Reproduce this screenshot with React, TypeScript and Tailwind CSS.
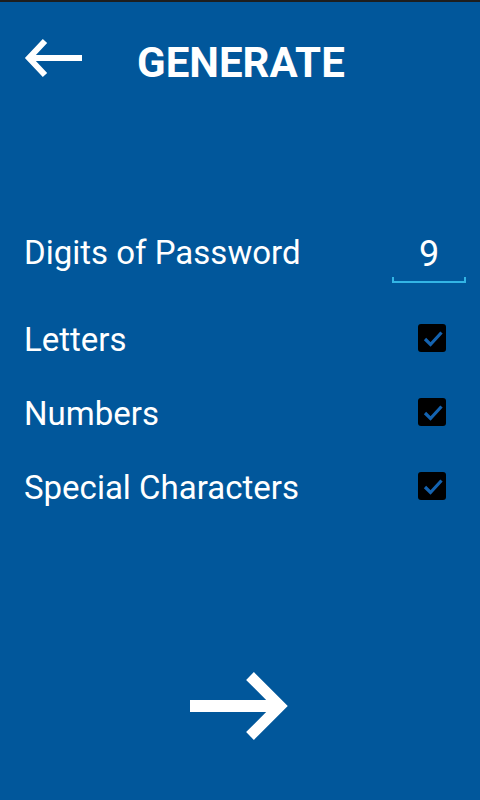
import { useState } from 'react';

const font = { fontFamily: 'Roboto, "Noto Sans", sans-serif' };

function CheckBox({ checked, onToggle }: { checked: boolean; onToggle: () => void }) {
  return (
    <button
      type="button"
      onClick={onToggle}
      className="w-7 h-7 bg-black rounded-[3px] block"
    >
      {checked && (
        <svg width="28" height="28" viewBox="0 0 28 28" fill="none">
          <path d="M7 15 L12.5 20.5 L23.5 8.5" stroke="#1463b0" strokeWidth="3.2" />
        </svg>
      )}
    </button>
  );
}

export default function App() {
  const [digits] = useState('9');
  const [opts, setOpts] = useState({ letters: true, numbers: true, special: true });

  const rows: { key: keyof typeof opts; label: string }[] = [
    { key: 'letters', label: 'Letters' },
    { key: 'numbers', label: 'Numbers' },
    { key: 'special', label: 'Special Characters' },
  ];

  return (
    <div className="w-full h-[800px] bg-[#01579b] text-white flex flex-col" style={font}>
      <div className="h-[2px] bg-[#1e1e1e]" />

      {/* header */}
      <div className="h-[110px] flex items-start pl-6">
        <svg className="mt-[36px]" width="58" height="40" viewBox="0 0 58 40" fill="none">
          <path d="M5 20 H58" stroke="white" strokeWidth="6" />
          <path d="M21 3 L5 20 L21 37" stroke="white" strokeWidth="6" />
        </svg>
        <h1 className="ml-[55px] mt-[40px] text-[42px] font-bold leading-none">GENERATE</h1>
      </div>

      {/* digits */}
      <div className="mt-[123px] flex items-start justify-between pl-6 pr-[14px]">
        <span className="mt-[2px] text-[33px] leading-[32px]">Digits of Password</span>
        <div className="w-[74px] flex flex-col">
          <span className="h-[36px] text-[36px] leading-[38px] text-center">{digits}</span>
          <div className="mt-[6px] h-[6px] border-x-2 border-b-2 border-[#33b5e5]" />
        </div>
      </div>

      {/* options */}
      <div className="mt-[18px] flex flex-col">
        {rows.map((r) => (
          <div key={r.key} className="h-[74px] flex items-center justify-between pl-6 pr-[34px]">
            <span className="mt-[3px] text-[33px] leading-[32px]">{r.label}</span>
            <CheckBox
              checked={opts[r.key]}
              onToggle={() => setOpts((o) => ({ ...o, [r.key]: !o[r.key] }))}
            />
          </div>
        ))}
      </div>

      {/* next */}
      <div className="mt-[149px] flex justify-center">
        <svg width="100" height="68" viewBox="0 0 100 68" fill="none">
          <path d="M0 34 H92" stroke="white" strokeWidth="12" />
          <path d="M60 4 L90 34 L60 64" stroke="white" strokeWidth="11" />
        </svg>
      </div>
    </div>
  );
}
